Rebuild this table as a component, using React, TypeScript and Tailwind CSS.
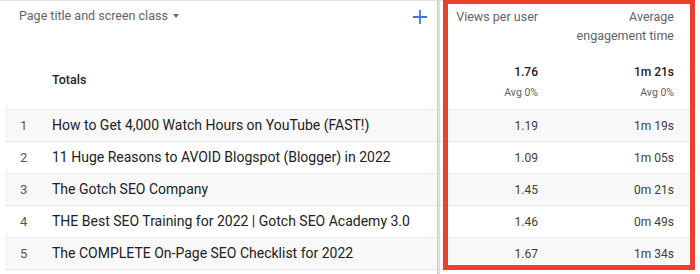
import React from 'react';

const rows = [
  { n: 1, title: 'How to Get 4,000 Watch Hours on YouTube (FAST!)', views: '1.19', time: '1m 19s' },
  { n: 2, title: '11 Huge Reasons to AVOID Blogspot (Blogger) in 2022', views: '1.09', time: '1m 05s' },
  { n: 3, title: 'The Gotch SEO Company', views: '1.45', time: '0m 21s' },
  { n: 4, title: 'THE Best SEO Training for 2022 | Gotch SEO Academy 3.0', views: '1.46', time: '0m 49s' },
  { n: 5, title: 'The COMPLETE On-Page SEO Checklist for 2022', views: '1.67', time: '1m 34s' },
];

export default function App() {
  return (
    <div className="relative w-[700px] h-[274px] overflow-hidden bg-white font-['Roboto',sans-serif] text-[14px]">
      <div className="flex h-full">
        {/* dimension column */}
        <div className="w-[437px] pl-[5px] border-t border-[#e3e3e3]">
          <div className="h-[108px] flex flex-col">
            <div className="flex items-center justify-between h-[30px] pl-[14px] pr-[9px]">
              <div className="flex items-center text-[#5f6368] text-[12.5px]">
                <span>Page title and screen class</span>
                <span className="ml-[5px] w-0 h-0 border-l-[3.5px] border-r-[3.5px] border-t-[4px] border-l-transparent border-r-transparent border-t-[#6b6f73]" />
              </div>
              <svg width="16" height="16" viewBox="0 0 16 16" className="text-[#3d78d8] mt-[2px]">
                <path d="M8 1v14M1 8h14" stroke="currentColor" strokeWidth="1.8" />
              </svg>
            </div>
            <div className="flex-1 flex items-center pl-[47px] pt-[20px] text-[#202124] font-medium text-[12.5px]">Totals</div>
          </div>
          {rows.map((r) => (
            <div
              key={r.n}
              className={`h-[32px] flex items-center border-t border-[#e8e8e8] text-[#202124] ${r.n % 2 === 1 ? 'bg-[#f8f8f8]' : 'bg-white'}`}
            >
              <span className="w-[47px] pl-[15px] text-[#555] text-[13px]">{r.n}</span>
              <span>{r.title}</span>
            </div>
          ))}
          <div className="border-t border-[#e8e8e8]" />
        </div>

        {/* divider */}
        <div className="w-[3px] bg-[#dedede] border-l border-[#cfcfcf]" />

        {/* metrics */}
        <div className="w-[249px] border-t border-[#e3e3e3] text-[#3c4043]">
          <div className="h-[108px] flex flex-col">
            <div className="flex h-[46px] pt-[6px] text-[#5f6368] text-[12.5px] leading-[19px]">
              <div className="w-[98px] text-right">Views per user</div>
              <div className="w-[136px] text-right">
                Average
                <br />
                engagement time
              </div>
            </div>
            <div className="flex pt-[16px] text-[#202124]">
              <div className="w-[98px] text-right">
                <div className="font-medium text-[12px]">1.76</div>
                <div className="text-[10.5px] text-[#5f6368] mt-[4px]">Avg 0%</div>
              </div>
              <div className="w-[136px] text-right">
                <div className="font-medium text-[12px]">1m 21s</div>
                <div className="text-[10.5px] text-[#5f6368] mt-[4px]">Avg 0%</div>
              </div>
            </div>
          </div>
          {rows.map((r) => (
            <div
              key={r.n}
              className={`h-[32px] flex items-center border-t border-[#e8e8e8] text-[12px] ${r.n % 2 === 1 ? 'bg-[#f8f8f8]' : 'bg-white'}`}
            >
              <div className="w-[98px] text-right">{r.views}</div>
              <div className="w-[136px] text-right">{r.time}</div>
            </div>
          ))}
          <div className="border-t border-[#e8e8e8]" />
        </div>
      </div>

      {/* highlight annotation */}
      <div className="absolute left-[443px] top-[-1px] w-[252px] h-[271px] border-[5px] border-[#e8412c] pointer-events-none" />
    </div>
  );
}
